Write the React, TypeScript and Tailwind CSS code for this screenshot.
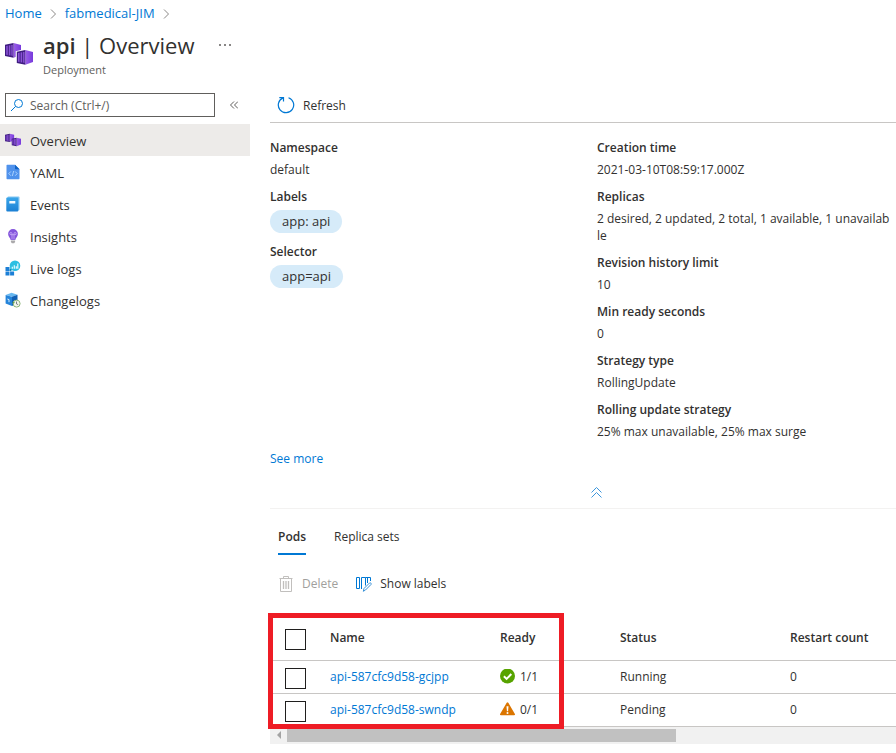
import React from "react";

function ContainersIcon({ className }: { className: string }) {
  return (
    <svg viewBox="0 0 28 24" className={className} aria-hidden="true">
      <defs>
        <linearGradient id="containerSide" x1="0" y1="0" x2="1" y2="0">
          <stop offset="0" stopColor="#9a5ee6" />
          <stop offset="1" stopColor="#773adc" />
        </linearGradient>
      </defs>
      <path d="M8.500 1 16 3v10l-7.500 2.700z" fill="url(#containerSide)" />
      <path d="M0 2.800 8.500 1v14.700L0 14z" fill="#3f1d80" />
      <path d="M1.200 4.100 2.800 3.800v9.200l-1.600-.3zM3.800 3.600l1.600-.3v10.200l-1.600-.3zM6.300 3.100l1.400-.2v11l-1.400-.3z" fill="#8a52d6" />
      <path d="M10.700 9.300 20.300 7l8.700 2v12l-8.700 3-9.600-2z" fill="#fff" className="[.size-4_&]:fill-transparent" />
      <path d="M20.300 8 28 10v10l-7.700 2.800z" fill="url(#containerSide)" />
      <path d="M11.800 9.800 20.300 8v14.800l-8.500-1.800z" fill="#3f1d80" />
      <path d="M13 11.100l1.600-.3v9.200l-1.600-.3zM15.600 10.600l1.600-.3v10.200l-1.600-.3zM18.100 10.100l1.400-.2v11l-1.400-.3z" fill="#8a52d6" />
    </svg>
  );
}

function YamlIcon() {
  return (
    <svg viewBox="0 0 16 16" className="size-4" aria-hidden="true">
      <path d="M1.500 1.500A.7.700 0 0 1 2.200.7H10l4.500 4.500v9.300a.7.700 0 0 1-.7.700H2.200a.7.700 0 0 1-.7-.7z" fill="#5092ec" />
      <path d="M10 .7v3.800c0 .4.300.7.700.7h3.800z" fill="#0f62c4" />
      <path d="M5.800 7.500 3.800 9.600l2 2.100M10.200 7.500l2 2.100-2 2.100M8.700 7l-1.400 5" stroke="#b6d8ff" strokeWidth=".9" fill="none" />
    </svg>
  );
}

function EventsIcon() {
  return (
    <svg viewBox="0 0 16 16" className="size-4" aria-hidden="true">
      <defs>
        <linearGradient id="bookCover" x1="0" y1="0" x2="0" y2="1">
          <stop offset="0" stopColor="#3aa6ea" />
          <stop offset="1" stopColor="#1b80d4" />
        </linearGradient>
      </defs>
      <rect x="2.500" y=".6" width="12" height="14" rx="1" fill="#83c5f2" />
      <rect x="1.300" y="1.500" width="12" height="14" rx="1" fill="url(#bookCover)" />
      <rect x="4.300" y="5" width="6" height="2.600" rx=".4" fill="#f2faff" />
    </svg>
  );
}

function InsightsIcon() {
  return (
    <svg viewBox="0 0 16 16" className="size-4" aria-hidden="true">
      <path d="M8 1a4.900 4.900 0 0 0-4.900 4.900c0 2.900 2.300 3.700 2.600 6.100h4.600c.3-2.400 2.600-3.200 2.600-6.100A4.900 4.900 0 0 0 8 1z" fill="#8455dc" />
      <path d="M7 11.500V6.700H6a1.100 1.100 0 1 1 1-1.100v1.100h2V5.600a1.100 1.100 0 1 1 1 1.100H9v4.800" stroke="#d3b8fb" strokeWidth=".7" fill="none" />
      <path d="M5.900 12.400h4.200v1.500l-1 1.300H6.900l-1-1.300z" fill="#aaa9ab" />
    </svg>
  );
}

function LiveLogsIcon() {
  return (
    <svg viewBox="0 0 16 16" className="size-4" aria-hidden="true">
      <path d="M.5 7h4v4h-4zM.5 11.600h4v4h-4zM5.100 11.600h4v4h-4z" fill="#1c7fd6" />
      <path d="M5 10.800 7 8" stroke="#1686b8" strokeWidth="2" />
      <circle cx="10" cy="5.800" r="5.300" fill="#2bbfe2" />
      <path d="M7.300 6.700v2M9.300 5.200v3.500M11.300 6.300v2.400M12.800 3.500v5.200" stroke="#e7fbff" strokeWidth="1.200" />
    </svg>
  );
}

function ChangelogsIcon() {
  return (
    <svg viewBox="0 0 16 16" className="size-4" aria-hidden="true">
      <path d="M6.500.8 12.500 2.700 7.500 4.800.6 3z" fill="#66b7f0" />
      <path d="M.6 3l6.400 1.800v9.200L.6 11.500z" fill="#2484da" />
      <path d="M7 4.800 12.500 2.700v8.500L7 14z" fill="#0f5fb4" />
      <path d="M2.300 7l1.700.6v2.600" stroke="#d6ecff" strokeWidth="1" fill="none" />
      <circle cx="11.600" cy="11.600" r="3.500" fill="#f3f7ed" stroke="#8eb57b" strokeWidth="1" />
      <path d="M11.500 9.500v2.400l1.700.8" stroke="#59636b" strokeWidth=".8" fill="none" />
      <path d="M7.200 10.300l1.500 1.500 1.300-1.500" fill="#5c9b40" />
    </svg>
  );
}

function SearchIcon() {
  return (
    <svg viewBox="0 0 14 14" className="size-3.5 shrink-0" fill="none" stroke="#0078d4" aria-hidden="true">
      <circle cx="8.500" cy="5.500" r="4" />
      <path d="M5.500 8.500 1 13" />
    </svg>
  );
}

function RefreshIcon() {
  return (
    <svg viewBox="0 0 18 18" className="size-[18px]" fill="none" stroke="#0078d4" strokeWidth="1.200" aria-hidden="true">
      <path d="M11.500 1.700A7.700 7.700 0 1 1 6 1.900" />
      <path d="M2.300 1.600H6.500V5.600" />
    </svg>
  );
}

function TrashIcon() {
  return (
    <svg viewBox="0 0 16 16" className="size-4" fill="none" stroke="#c1bfbd" aria-hidden="true">
      <path d="M1.500 2.500h13M5.500 2.500v-2h5v2M2.500 2.500v13h11v-13" />
      <path d="M5.500 5v8M8 5v8M10.500 5v8" strokeWidth="1.300" />
    </svg>
  );
}

function LabelsIcon() {
  return (
    <svg viewBox="0 0 16 16" className="size-4" fill="none" stroke="#0078d4" aria-hidden="true">
      <path d="M.5 1.500h3v11h-3zM5.500 13V1.500h4v8M9.500 1.500h5v3.500M11.500 2v5" />
      <path d="M7.300 15.300l.7-2.800 5.500-5.500c1-.7 2.200.5 1.500 1.500l-5.500 5.500z" stroke="#3c93d8" fill="#fff" />
    </svg>
  );
}

function ReadyIcon({ ok }: { ok: boolean }) {
  return ok ? (
    <svg viewBox="0 0 16 16" className="size-4" role="img" aria-label="Healthy">
      <circle cx="7.500" cy="7" r="7.500" fill="#57a300" />
      <path d="M3.900 7.200 6.600 9.900l4.700-4.900" stroke="#fff" strokeWidth="2" fill="none" />
    </svg>
  ) : (
    <svg viewBox="0 0 16 16" className="size-4" role="img" aria-label="Warning">
      <path d="M6.700.7a.9.900 0 0 1 1.600 0l6.600 11.200a.9.900 0 0 1-.8 1.400H.9a.9.900 0 0 1-.8-1.400z" fill="#db7500" />
      <path d="M6.500 4.200h2l-.4 5H6.900z" fill="#fff" />
      <circle cx="7.500" cy="10.900" r="1" fill="#fff" />
    </svg>
  );
}

function CrumbArrow() {
  return (
    <svg viewBox="0 0 7 10" className="h-2.5 w-[7px]" fill="none" stroke="#8a8886" aria-hidden="true">
      <path d="M1 .5 5.500 5 1 9.500" />
    </svg>
  );
}

const menu = [
  { label: "Overview", icon: <ContainersIcon className="size-4" /> },
  { label: "YAML", icon: <YamlIcon /> },
  { label: "Events", icon: <EventsIcon /> },
  { label: "Insights", icon: <InsightsIcon /> },
  { label: "Live logs", icon: <LiveLogsIcon /> },
  { label: "Changelogs", icon: <ChangelogsIcon /> },
];

const details = [
  ["Creation time", "2021-03-10T08:59:17.000Z"],
  ["Replicas", "2 desired, 2 updated, 2 total, 1 available, 1 unavailable"],
  ["Revision history limit", "10"],
  ["Min ready seconds", "0"],
  ["Strategy type", "RollingUpdate"],
  ["Rolling update strategy", "25% max unavailable, 25% max surge"],
];

const pods = [
  { name: "api-587cfc9d58-gcjpp", ok: true, ready: "1/1", status: "Running", restarts: 0 },
  { name: "api-587cfc9d58-swndp", ok: false, ready: "0/1", status: "Pending", restarts: 0 },
];

function Field({ label, children }: { label: string; children: React.ReactNode }) {
  return (
    <div>
      <dt className="mb-1 leading-[18px] font-semibold">{label}</dt>
      <dd className="leading-[17px] break-all">{children}</dd>
    </div>
  );
}

function Pill({ children }: { children: React.ReactNode }) {
  return (
    <span className="flex h-[23px] w-fit items-center rounded-full bg-[#d6ebf9] px-3 text-[13px]">
      {children}
    </span>
  );
}

function Tick({ label }: { label: string }) {
  return (
    <input
      type="checkbox"
      aria-label={label}
      className="mt-[3px] ml-[15px] block size-[21px] appearance-none border border-[#201f1e] bg-white checked:bg-[#0078d4]"
    />
  );
}

export default function App() {
  return (
    <div className="overflow-hidden bg-white font-['Open_Sans','Noto_Sans',sans-serif] text-xs text-[#323130]">
      <nav aria-label="Breadcrumb" className="flex h-7 items-center gap-2 pl-[5px] text-[13px] text-[#0078d4]">
        <a href="#home">Home</a>
        <CrumbArrow />
        <a href="#cluster">fabmedical-JIM</a>
        <CrumbArrow />
      </nav>

      <header className="flex h-[60px] gap-2.5 pl-[5px]">
        <ContainersIcon className="mt-3.5 h-6 w-7" />
        <div>
          <div className="flex items-center gap-6">
            <h1 className="pt-px text-[22px] leading-8">
              <span className="font-semibold">api</span> | Overview
            </h1>
            <button aria-label="More actions" className="flex gap-[3px]">
              <span className="size-0.5 rounded-full bg-[#605e5c]" />
              <span className="size-0.5 rounded-full bg-[#605e5c]" />
              <span className="size-0.5 rounded-full bg-[#605e5c]" />
            </button>
          </div>
          <p className="pt-px text-[11px] leading-4 text-[#605e5c]">Deployment</p>
        </div>
      </header>

      <div className="flex">
        <aside className="w-[250px] shrink-0">
          <div className="flex h-9 items-start gap-[15px] pt-[5px] pl-[5px]">
            <label className="flex h-6 w-[210px] items-center gap-1.5 border border-[#605e5c] px-1">
              <SearchIcon />
              <input
                type="search"
                aria-label="Search"
                placeholder="Search (Ctrl+/)"
                className="w-full min-w-0 pt-0.5 outline-none placeholder:text-[#605e5c]"
              />
            </label>
            <button aria-label="Collapse menu" className="pt-2">
              <svg viewBox="0 0 8 8" className="size-2" fill="none" stroke="#605e5c" aria-hidden="true">
                <path d="M4 .5.5 4 4 7.500M8 .5 4.500 4 8 7.500" />
              </svg>
            </button>
          </div>
          <ul>
            {menu.map((item, i) => (
              <li key={item.label}>
                <a
                  href="#menu"
                  aria-current={i === 0 ? "page" : undefined}
                  className="flex h-8 items-center gap-[9px] pl-[5px] text-[13px] aria-[current=page]:bg-[#edebe9]"
                >
                  {item.icon}
                  <span className="pt-1">{item.label}</span>
                </a>
              </li>
            ))}
          </ul>
        </aside>

        <main className="ml-5 min-w-0 grow">
          <div className="flex h-[35px] items-center border-b border-[#c8c6c4] pl-[7px]">
            <button className="flex items-center gap-2">
              <RefreshIcon />
              <span className="pt-0.5">Refresh</span>
            </button>
          </div>

          <div className="flex pt-4">
            <dl className="flex w-[327px] shrink-0 flex-col gap-2.5">
              <Field label="Namespace">default</Field>
              <Field label="Labels">
                <Pill>app: api</Pill>
              </Field>
              <Field label="Selector">
                <Pill>app=api</Pill>
              </Field>
            </dl>
            <dl className="flex min-w-0 grow flex-col gap-2.5 pr-1.5">
              {details.map(([label, value]) => (
                <Field key={label} label={label}>
                  {value}
                </Field>
              ))}
            </dl>
          </div>
          <a href="#more" className="mt-2.5 block w-fit leading-[18px] text-[#0078d4]">
            See more
          </a>

          <div className="flex h-[41px] items-center border-b border-[#f3f2f1] pt-2 pl-[321px]">
            <button aria-label="Collapse details">
              <svg viewBox="0 0 11 11" className="size-[11px]" fill="none" stroke="#3c96dc" aria-hidden="true">
                <path d="M.5 5.500l5-5 5 5M.5 10.500l5-5 5 5" />
              </svg>
            </button>
          </div>

          <div role="tablist" className="flex h-[46px] gap-7 pt-3 pl-2">
            <button role="tab" aria-selected="true" className="border-b-2 border-[#0078d4] font-semibold">
              Pods
            </button>
            <button role="tab" aria-selected="false" className="border-b-2 border-transparent">
              Replica sets
            </button>
          </div>

          <div className="flex h-[58px] items-center gap-[18px] pl-2">
            <button disabled className="flex items-center gap-2 text-[#a19f9d]">
              <TrashIcon />
              Delete
            </button>
            <button className="flex items-center gap-2">
              <LabelsIcon />
              Show labels
            </button>
          </div>

          <div className="relative pt-1">
            <table className="w-full table-fixed text-left">
              <colgroup>
                <col className="w-[60px]" />
                <col className="w-[170px]" />
                <col className="w-[120px]" />
                <col className="w-[170px]" />
                <col />
              </colgroup>
              <thead>
                <tr className="h-[43px] border-b border-[#c8c6c4]">
                  <td>
                    <Tick label="Select all pods" />
                  </td>
                  <th className="font-semibold">Name</th>
                  <th className="font-semibold">Ready</th>
                  <th className="font-semibold">Status</th>
                  <th className="font-semibold">Restart count</th>
                </tr>
              </thead>
              <tbody>
                {pods.map((pod) => (
                  <tr key={pod.name} className="h-[33px] border-b border-[#c8c6c4]">
                    <td>
                      <Tick label={pod.name} />
                    </td>
                    <td>
                      <a href="#pod" className="text-[#0078d4]">
                        {pod.name}
                      </a>
                    </td>
                    <td>
                      <span className="flex items-center gap-1">
                        <ReadyIcon ok={pod.ok} />
                        {pod.ready}
                      </span>
                    </td>
                    <td>{pod.status}</td>
                    <td>{pod.restarts}</td>
                  </tr>
                ))}
              </tbody>
            </table>
            <div className="flex h-[17px] items-center bg-[#f1f1f1]">
              <button aria-label="Scroll left" className="flex w-[17px] justify-center">
                <svg viewBox="0 0 4 8" className="h-2 w-1" fill="#a3a3a3" aria-hidden="true">
                  <path d="M4 0v8L0 4z" />
                </svg>
              </button>
              <div className="h-[13px] w-[389px] bg-[#c1c1c1]" />
            </div>
            <div className="pointer-events-none absolute top-0 -left-0.5 h-[116px] w-[296px] border-5 border-[#ee1c25]" />
          </div>
        </main>
      </div>
    </div>
  );
}
